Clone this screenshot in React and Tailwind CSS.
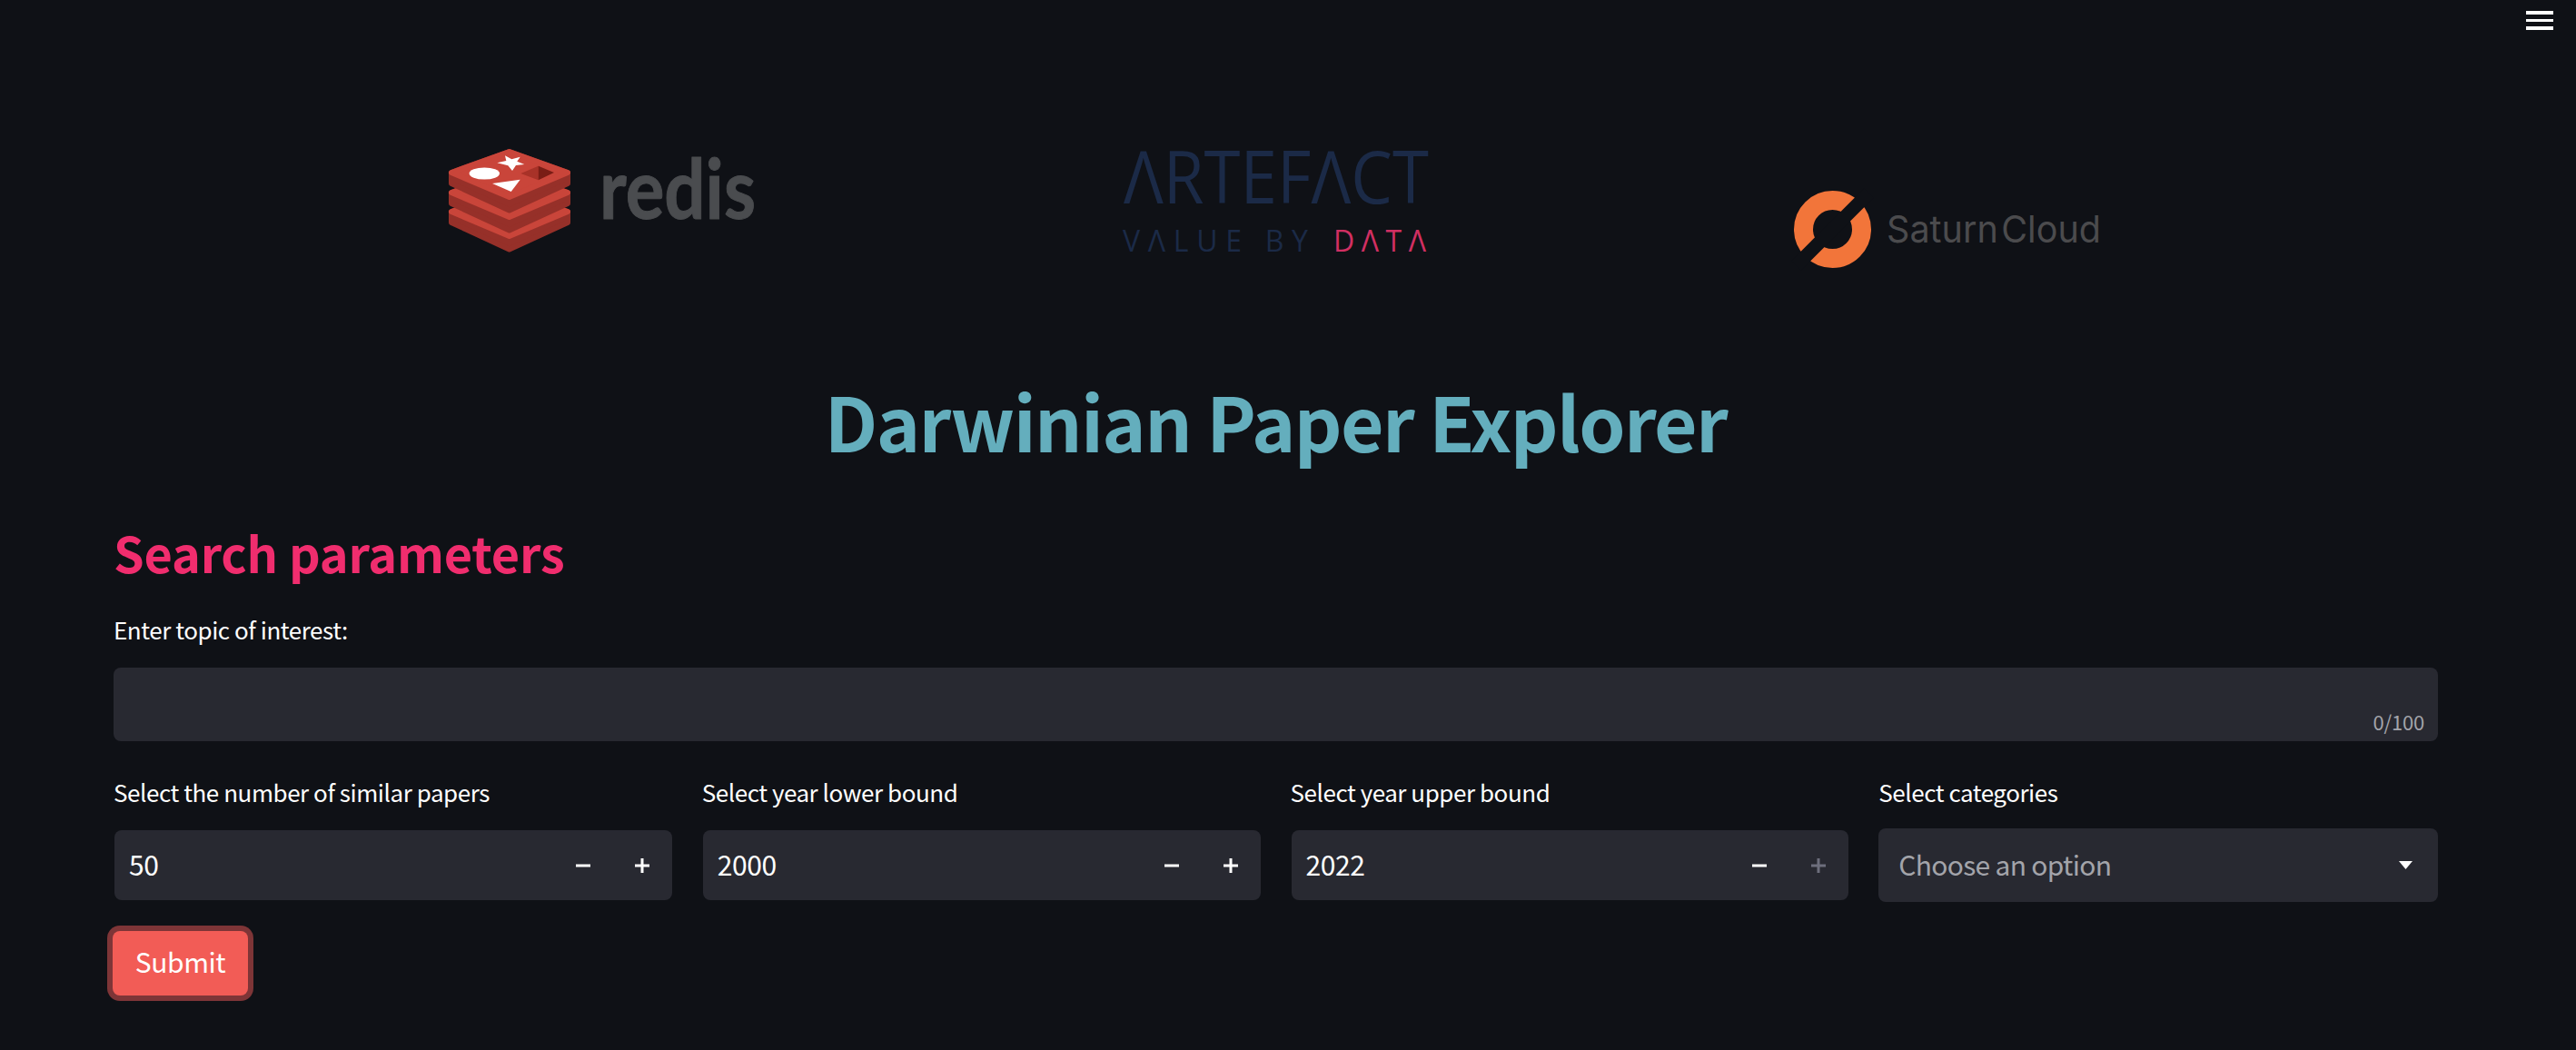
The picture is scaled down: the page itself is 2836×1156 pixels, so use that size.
import React from 'react';

const FONT = "font-['Noto_Sans_CJK_JP','Source_Sans_Pro',sans-serif]";

const RedisLayer = ({ y }) => (
  <g transform={`translate(0 ${y})`} strokeLinejoin="round" strokeWidth="6">
    <path d="M57 60 L57 72 L120.7 101.5 L185 72 L185 60 L120.7 37 Z" fill="#963029" stroke="#963029" />
    <path d="M57 60 L120.7 37 L185 60 L120.7 87 Z" fill="#c9453a" stroke="#c9453a" />
  </g>
);

const RedisLogo = () => (
  <svg width="460" height="180" viewBox="0 0 460 180" className="shrink-0">
    <RedisLayer y={43} />
    <RedisLayer y={22} />
    <RedisLayer y={0} />
    <ellipse cx="93.3" cy="61" rx="16.7" ry="6.6" fill="#fff" />
    <polygon
      points="116,41.3 123.3,45.3 132.7,42.7 129.3,47.7 137.3,51 128,52 124,58 119.3,52.3 107.3,49.3 117.3,47"
      fill="#fff"
    />
    <polygon points="102,72 132.7,67.7 122.7,81" fill="#fff" />
    <polygon points="133.3,61 152.7,52.7 152.7,68.3" fill="#a83228" />
    <polygon points="152.7,52.7 170,60 152.7,68.3" fill="#7a1d15" />
    <text
      x="220"
      y="111"
      fontFamily="Lato, sans-serif"
      fontWeight="700"
      fontSize="92"
      fill="#4a4c4f"
      stroke="#4a4c4f"
      strokeWidth="1"
      strokeLinejoin="round"
      textLength="172"
      lengthAdjust="spacingAndGlyphs"
    >
      redis
    </text>
  </svg>
);

const ArtefactLogo = () => (
  <svg width="460" height="180" viewBox="0 0 460 180" className="shrink-0">
    <text
      x="57"
      y="94"
      fontFamily="'Open Sans', sans-serif"
      fontWeight="500"
      fontSize="81"
      fill="#1b2a47"
      textLength="336"
      lengthAdjust="spacingAndGlyphs"
    >
      ΛRTEFΛCT
    </text>
    <text
      x="56"
      y="147"
      fontFamily="'Open Sans', sans-serif"
      fontWeight="500"
      fontSize="32"
      fill="#1b2a47"
      textLength="204"
      lengthAdjust="spacing"
    >
      VΛLUE BY
    </text>
    <text
      x="288"
      y="147"
      fontFamily="'Open Sans', sans-serif"
      fontWeight="500"
      fontSize="32"
      fill="#d12f62"
      textLength="102"
      lengthAdjust="spacing"
    >
      DΛTΛ
    </text>
  </svg>
);

const SaturnLogo = () => (
  <svg width="460" height="180" viewBox="0 0 460 180" className="shrink-0">
    <circle cx="97.5" cy="122.5" r="32" fill="none" stroke="#f2753a" strokeWidth="21" />
    <line x1="137.5" y1="82.5" x2="57.5" y2="162.5" stroke="#0f1116" strokeWidth="15" />
    <text
      x="157"
      y="137"
      fontFamily="Inter, sans-serif"
      fontSize="41"
      fill="#4b4b4d"
      wordSpacing="-8"
      textLength="236"
      lengthAdjust="spacingAndGlyphs"
    >
      Saturn Cloud
    </text>
  </svg>
);

const StepIcon = ({ plus, disabled }) => (
  <svg width="16" height="16" viewBox="0 0 16 16" className={disabled ? 'text-[#6d6e7c]' : 'text-white'}>
    <path d={plus ? 'M0 8h16M8 0v16' : 'M0 8h16'} stroke="currentColor" strokeWidth="3" fill="none" />
  </svg>
);

const NumberField = ({ label, value, plusDisabled }) => (
  <div>
    <label className="block h-[40px] text-[26px] leading-[40px] tracking-[-0.45px] text-white">{label}</label>
    <div className="mt-[22px] mx-[1px] flex h-[77px] items-center rounded-[8px] bg-[#282931] pl-[16px] pr-[25px]">
      <input
        readOnly
        value={value}
        className="min-w-0 flex-1 bg-transparent pb-[3px] text-[30px] tracking-[-0.4px] text-white outline-none"
      />
      <div className="flex items-center gap-[49px]">
        <StepIcon />
        <StepIcon plus disabled={plusDisabled} />
      </div>
    </div>
  </div>
);

const App = () => {
  return (
    <div className={`relative h-[1156px] overflow-hidden bg-[#0f1116] pl-[125px] pr-[152px] ${FONT}`}>
      {/* Menu button */}
      <button className="absolute right-[25px] top-[12px] flex w-[30px] flex-col gap-[5px]">
        <span className="block h-[3.5px] w-full bg-white" />
        <span className="block h-[3.5px] w-full bg-white" />
        <span className="block h-[3.5px] w-full bg-white" />
      </button>

      {/* Sponsors */}
      <div className="flex gap-[280px] pl-[315px] pt-[130px]">
        <RedisLogo />
        <ArtefactLogo />
        <SaturnLogo />
      </div>

      <h1 className="mt-[98px] text-center text-[82px] font-bold leading-[110px] tracking-[-1.6px] text-[#64aebd]">
        Darwinian Paper Explorer
      </h1>

      <h2 className="mt-[54px] text-[54px] font-bold leading-[72px] tracking-[-0.2px] text-[#f02d6e]">
        Search parameters
      </h2>

      <label className="mt-[29px] block h-[40px] text-[26px] leading-[40px] tracking-[-0.45px] text-white">
        Enter topic of interest:
      </label>

      <div className="relative mt-[22px] h-[81px]">
        <textarea readOnly className="block h-full w-full resize-none rounded-[8px] bg-[#282931] outline-none" />
        <span className="absolute bottom-[4px] right-[15px] text-[22px] leading-[36px] tracking-[-0.2px] text-[#a3a4aa]">
          0/100
        </span>
      </div>

      <div className="mt-[36px] grid grid-cols-4 gap-[32px]">
        <NumberField label="Select the number of similar papers" value="50" />
        <NumberField label="Select year lower bound" value="2000" />
        <NumberField label="Select year upper bound" value="2022" plusDisabled />
        <div>
          <label className="block h-[40px] text-[26px] leading-[40px] tracking-[-0.45px] text-white">
            Select categories
          </label>
          <div className="mt-[20px] flex h-[81px] items-center justify-between rounded-[8px] bg-[#282931] pl-[22px] pr-[28px]">
            <span className="pb-[3px] text-[30px] tracking-[-0.7px] text-[#a3a4aa]">Choose an option</span>
            <svg width="15" height="9" viewBox="0 0 15 9">
              <polygon points="0,0 15,0 7.5,9" fill="#fff" />
            </svg>
          </div>
        </div>
      </div>

      <button className="mt-[32px] -ml-[1px] flex h-[71px] w-[149px] items-center justify-center rounded-[8px] bg-[#f25c56] pb-[4px] text-[30px] tracking-[-0.4px] text-white ring-[6px] ring-[#7e3537]">
        Submit
      </button>
    </div>
  );
};

export default App;
